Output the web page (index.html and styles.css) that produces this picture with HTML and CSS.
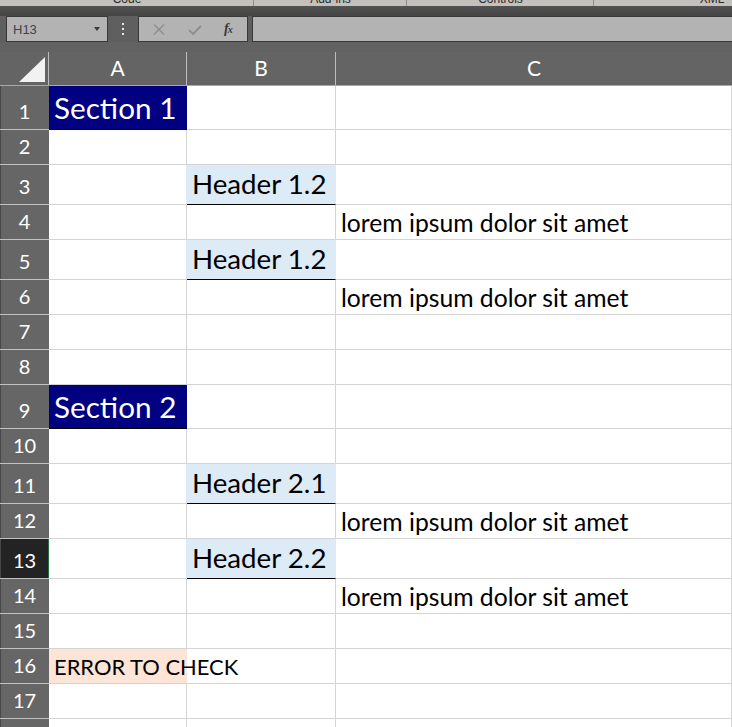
FILE: index.html
```html
<!DOCTYPE html>
<html>
<head>
<meta charset="utf-8">
<link rel="stylesheet" href="styles.css">
</head>
<body>
<div class="ribbon">
  <div class="grp g1"><span>Code</span></div>
  <div class="grp g2"><span>Add-ins</span></div>
  <div class="grp g3"><span>Controls</span></div>
  <div class="grp g4"><span>XML</span></div>
</div>
<div class="band"></div>
<div class="fbar">
  <div class="namebox"><span class="nbtext">H13</span><span class="caret"></span></div>
  <div class="dots"><i></i><i></i><i></i></div>
  <div class="fxbox">
    <svg class="ico" width="12" height="11" viewBox="0 0 12 11"><path d="M1 0.5 L11 10.5 M11 0.5 L1 10.5" stroke="#8e8e8e" stroke-width="1.4" fill="none"/></svg>
    <svg class="ico" width="14" height="10" viewBox="0 0 14 10"><path d="M1 5 L5 9 L13 1" stroke="#8e8e8e" stroke-width="1.8" fill="none"/></svg>
    <span class="fx">f<small>x</small></span>
  </div>
  <div class="finput"></div>
</div>
<div class="gap"></div>
<div class="sheet">
  <div class="colhead">
    <div class="corner"><svg width="48" height="33" viewBox="0 0 48 33"><polygon points="45,5 45,30 19,30" fill="#f2f2f2"/></svg></div>
    <div class="ch">A</div>
    <div class="ch">B</div>
    <div class="ch last">C</div>
  </div>

  <div class="row h44"><div class="rh">1</div><div class="c sec">Section 1</div><div class="c"></div><div class="c"></div></div>
  <div class="row h35"><div class="rh">2</div><div class="c"></div><div class="c"></div><div class="c"></div></div>
  <div class="row h40"><div class="rh">3</div><div class="c pre"></div><div class="c hdr">Header 1.2</div><div class="c"></div></div>
  <div class="row h35"><div class="rh">4</div><div class="c"></div><div class="c"></div><div class="c txt">lorem ipsum dolor sit amet</div></div>
  <div class="row h40"><div class="rh">5</div><div class="c pre"></div><div class="c hdr">Header 1.2</div><div class="c"></div></div>
  <div class="row h35"><div class="rh">6</div><div class="c"></div><div class="c"></div><div class="c txt">lorem ipsum dolor sit amet</div></div>
  <div class="row h35"><div class="rh">7</div><div class="c"></div><div class="c"></div><div class="c"></div></div>
  <div class="row h35"><div class="rh">8</div><div class="c"></div><div class="c"></div><div class="c"></div></div>
  <div class="row h44"><div class="rh">9</div><div class="c sec">Section 2</div><div class="c"></div><div class="c"></div></div>
  <div class="row h35"><div class="rh">10</div><div class="c"></div><div class="c"></div><div class="c"></div></div>
  <div class="row h40"><div class="rh">11</div><div class="c pre"></div><div class="c hdr">Header 2.1</div><div class="c"></div></div>
  <div class="row h35"><div class="rh">12</div><div class="c"></div><div class="c"></div><div class="c txt">lorem ipsum dolor sit amet</div></div>
  <div class="row h40"><div class="rh sel">13</div><div class="c pre"></div><div class="c hdr">Header 2.2</div><div class="c"></div></div>
  <div class="row h35"><div class="rh">14</div><div class="c"></div><div class="c"></div><div class="c txt">lorem ipsum dolor sit amet</div></div>
  <div class="row h35"><div class="rh">15</div><div class="c"></div><div class="c"></div><div class="c"></div></div>
  <div class="row h35"><div class="rh">16</div><div class="c err">ERROR TO CHECK</div><div class="c"></div><div class="c"></div></div>
  <div class="row h35"><div class="rh">17</div><div class="c"></div><div class="c"></div><div class="c"></div></div>
  <div class="row h35"><div class="rh">18</div><div class="c"></div><div class="c"></div><div class="c"></div></div>
</div>
</body>
</html>
```
FILE: styles.css
```css
html, body {
  margin: 0;
  padding: 0;
  background: #626262;
  overflow: hidden;
  width: 732px;
  height: 727px;
  font-family: Lato, "Open Sans", sans-serif;
}

.ribbon {
  height: 6px;
  background: #c4c1bd;
  display: flex;
  overflow: hidden;
}
.grp {
  flex: none;
  display: flex;
  justify-content: center;
  box-shadow: inset -1px 0 0 #8e8b88;
}
.grp span {
  font-family: "Liberation Sans", sans-serif;
  font-size: 12px;
  line-height: 12px;
  margin-top: -7px;
  color: #2b2b2b;
}
.g1 { width: 254px; }
.g2 { width: 153px; }
.g3 { width: 187px; }
.g4 { width: 236px; box-shadow: none; }

.band {
  height: 10px;
  background: linear-gradient(#525252, #454545);
}

.fbar {
  display: flex;
  height: 26px;
  background: #5f5f5f;
}
.namebox {
  margin-left: 6px;
  width: 102px;
  box-sizing: border-box;
  border: 1px solid #383838;
  background: #b3b3b3;
  display: flex;
  align-items: center;
  justify-content: space-between;
  padding: 0 7px 0 6px;
}
.nbtext {
  font-family: "Liberation Sans", sans-serif;
  font-size: 13px;
  color: #3a4350;
}
.caret {
  width: 0;
  height: 0;
  border-left: 3.5px solid transparent;
  border-right: 3.5px solid transparent;
  border-top: 4px solid #3a3a3a;
  margin-top: -1px;
}
.dots {
  width: 30px;
  display: flex;
  flex-direction: column;
  align-items: center;
  justify-content: center;
  gap: 3px;
}
.dots i {
  display: block;
  width: 2px;
  height: 2px;
  background: #e8e8e8;
}
.fxbox {
  width: 110px;
  box-sizing: border-box;
  border: 1px solid #383838;
  background: #b3b3b3;
  display: flex;
  align-items: center;
  padding-left: 14px;
}
.ico { flex: none; }
.fxbox svg:first-child { margin-right: 23px; margin-top: 1px; }
.fxbox svg:nth-child(2) { margin-right: 22px; margin-top: 1px; }
.fx {
  font-family: "Liberation Serif", serif;
  font-style: italic;
  font-weight: bold;
  font-size: 14px;
  color: #3a3a3a;
  letter-spacing: -1px;
}
.fx small { font-size: 10px; }
.finput {
  margin-left: 4px;
  flex: 1;
  border: 1px solid #383838;
  border-right: none;
  background: #b3b3b3;
}

.gap { height: 10px; }

.sheet { background: #fff; }

.colhead {
  display: grid;
  grid-template-columns: 49px 138px 149px 1fr;
  height: 34px;
  background: #646464;
  border-bottom: 1px solid #a8a8a8;
  box-sizing: border-box;
}
.corner {
  border-right: 1px solid #bdbdbd;
  display: flex;
}
.ch {
  border-right: 1px solid #bdbdbd;
  color: #fff;
  font-size: 21px;
  display: flex;
  align-items: center;
  justify-content: center;
  padding-bottom: 3px;
  box-sizing: border-box;
}
.ch.last { border-right: none; }

.row {
  display: grid;
  grid-template-columns: 49px 138px 149px 1fr;
}
.h44 { height: 44px; }
.h35 { height: 35px; }
.h40 { height: 40px; }

.rh {
  background: #666;
  color: #fff;
  font-size: 20px;
  display: flex;
  align-items: flex-end;
  justify-content: center;
  padding-bottom: 6px;
  box-sizing: border-box;
  border-bottom: 1px solid #c2c2c2;
  box-shadow: inset 1px 0 0 #474747;
}
.rh.sel {
  background: #232323;
  box-shadow: inset -1px 0 0 #217346, inset 1px 0 0 #474747;
}

.c {
  box-sizing: border-box;
  border-right: 1px solid #d4d4d4;
  border-bottom: 1px solid #d4d4d4;
  display: flex;
  align-items: flex-end;
  padding-left: 5px;
  white-space: nowrap;
  color: #000;
  min-width: 0;
}
.txt {
  font-size: 24.7px;
  line-height: 25px;
  padding-bottom: 4px;
}
.sec {
  background: #000080;
  border-right-color: #000080;
  border-bottom-color: #000;
  color: #fff;
  font-size: 29.7px;
  line-height: 30px;
  padding-left: 5px;
  padding-bottom: 6px;
}
.hdr {
  background: #ddebf7;
  border-right-color: #ddebf7;
  border-bottom-color: #000;
  font-size: 27.7px;
  line-height: 28px;
  padding-bottom: 6px;
}
.pre { border-right-color: #ddebf7; }
.err {
  background: #fce4d6;
  border-right-color: #fce4d6;
  position: relative;
  z-index: 1;
  font-size: 21.9px;
  line-height: 22px;
  padding-bottom: 5px;
}
```
